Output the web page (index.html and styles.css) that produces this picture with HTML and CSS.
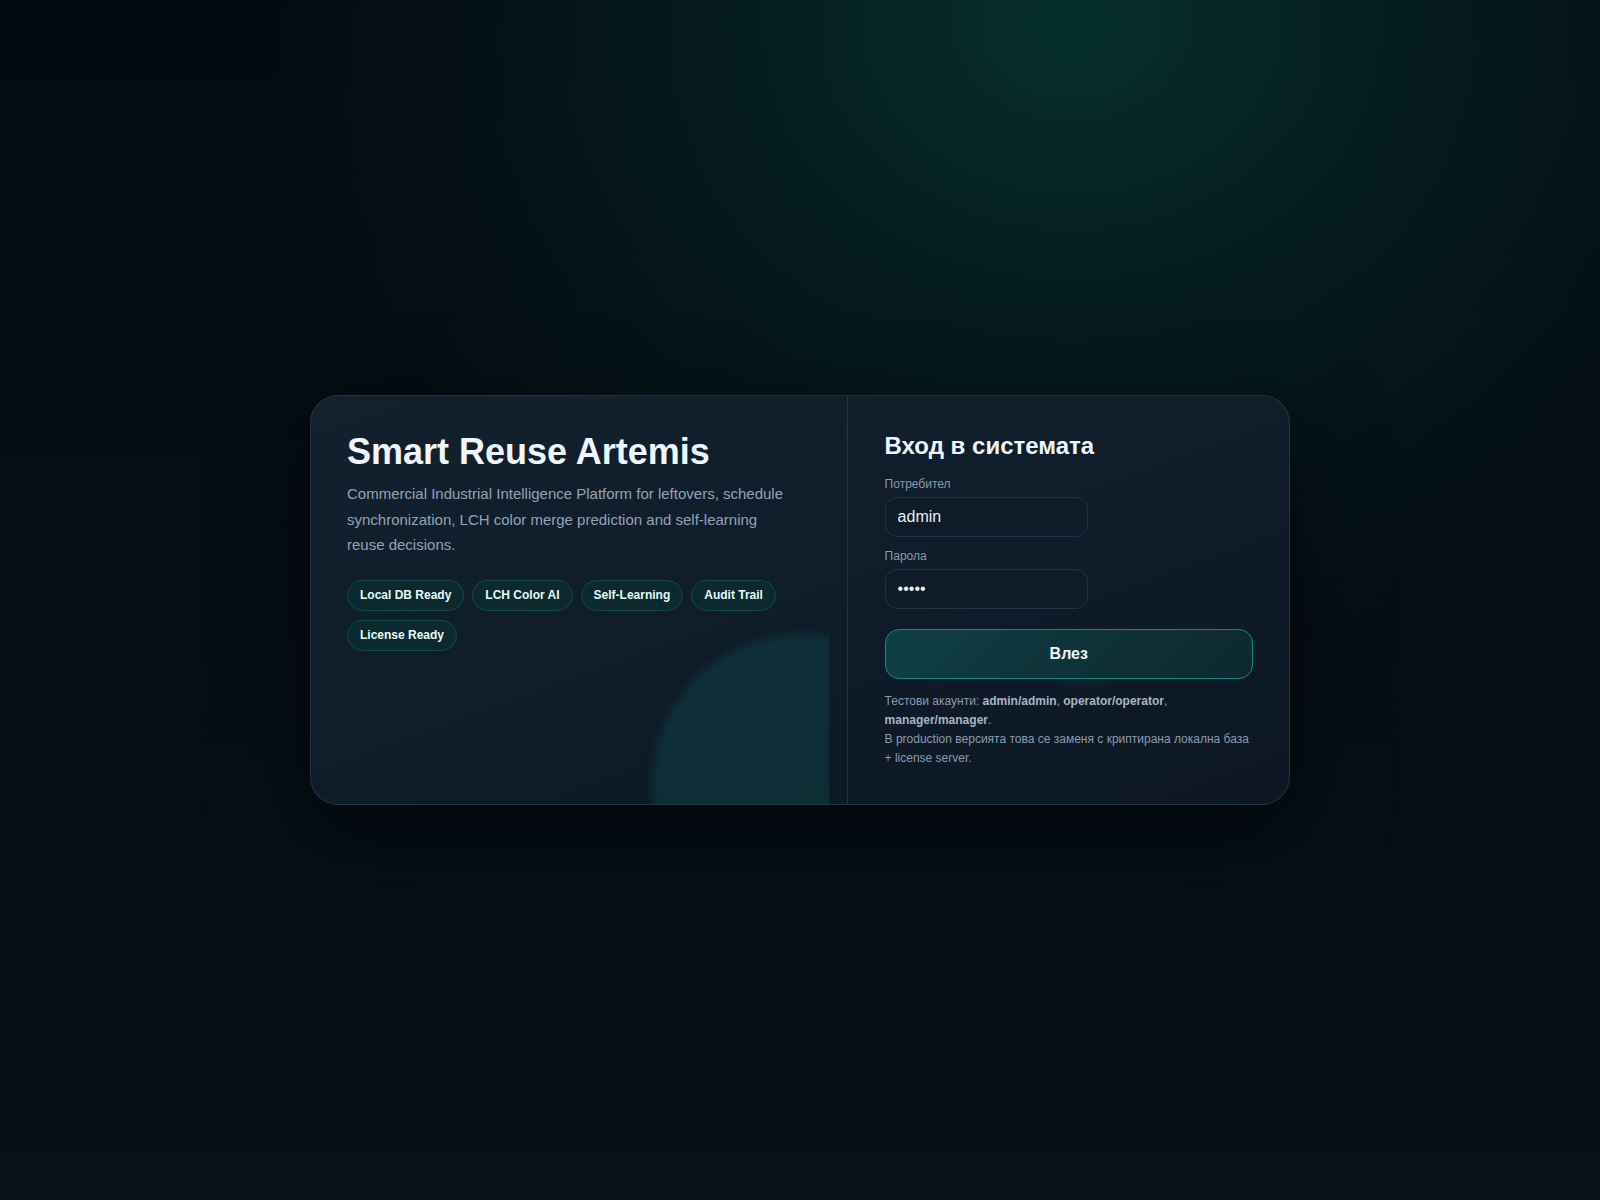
FILE: index.html
```html
<!DOCTYPE html>
<html lang="bg">
	<head>
		<meta charset="UTF-8" />
		<meta name="viewport" content="width=device-width, initial-scale=1.0" />
		<title>Smart Reuse Artemis - Вход</title>

		<link rel="stylesheet" href="styles.css">
	</head>
	<body>
		<div class="login-card">
			<div class="hero">
				<h1 class="hero-title">Smart Reuse Artemis</h1>
				<p class="hero-text">
					Commercial Industrial Intelligence Platform for leftovers, schedule
					synchronization, LCH color merge prediction and self-learning
					reuse decisions.
				</p>
				<div class="chips">
					<span class="chip">Local DB Ready</span>
					<span class="chip">LCH Color AI</span>
					<span class="chip">Self-Learning</span>
					<span class="chip">Audit Trail</span>
					<span class="chip">License Ready</span>
				</div>
			</div>

			<form class="login-form" onsubmit="return false;">
				<h2 class="form-title">Вход в системата</h2>

				<div class="field">
					<label for="username">Потребител</label>
					<input type="text" id="username" name="username" value="admin" />
				</div>

				<div class="field">
					<label for="password">Парола</label>
					<input type="password" id="password" name="password" value="admin" />
				</div>

				<button class="btn-login" type="submit">Влез</button>

				<p class="note">
					Тестови акаунти: <b>admin/admin</b>, <b>operator/operator</b>,
					<b>manager/manager</b>.<br />
					В production версията това се заменя с криптирана локална база
					+ license server.
				</p>
			</form>
		</div>
	</body>
</html>
```

FILE: styles.css
```css
* {
	box-sizing: border-box;
}

html,
body {
	height: 100%;
}

body {
	margin: 0;
	display: flex;
	align-items: center;
	justify-content: center;
	font-family: "Liberation Sans", Arial, sans-serif;
	color: #e2e8f0;
	background:
		radial-gradient(ellipse 800px 640px at 67% 2%, #06302c 0%, rgba(5, 40, 40, 0.6) 40%, rgba(5, 20, 26, 0) 100%),
		linear-gradient(180deg, #040a11 0%, #050e16 60%, #06111a 100%);
}

.login-card {
	width: 980px;
	display: grid;
	grid-template-columns: 1.17fr 1fr;
	column-gap: 18px;
	border: 1px solid rgba(148, 163, 184, 0.17);
	border-radius: 28px;
	background: linear-gradient(160deg, #13212f 0%, #0f1c29 50%, #0c1723 100%);
	box-shadow: 0 30px 90px rgba(0, 0, 0, 0.55);
	overflow: hidden;
}

/* left side */

.hero {
	position: relative;
	overflow: hidden;
	padding: 36px;
}

.hero::after {
	content: "";
	position: absolute;
	width: 300px;
	height: 300px;
	right: -123px;
	bottom: -130px;
	border-radius: 50%;
	background: rgba(16, 120, 115, 0.22);
	filter: blur(4px);
}

.hero-title {
	margin: 0 0 10px;
	font-size: 36px;
	line-height: 1.1;
	font-weight: bold;
	color: #eef5fc;
}

.hero-text {
	margin: 0;
	font-size: 15px;
	line-height: 1.7;
	color: #94a3b8;
}

.chips {
	display: flex;
	flex-wrap: wrap;
	gap: 9px 8px;
	margin-top: 22px;
}

.chip {
	padding: 7px 12px;
	font-size: 12px;
	line-height: 15px;
	font-weight: bold;
	color: #e6faf5;
	background: #0b292e;
	border: 1px solid #124a46;
	border-radius: 999px;
}

/* right side */

.login-form {
	padding: 36px 36px 36px 37px;
	border-left: 1px solid rgba(148, 163, 184, 0.18);
}

.form-title {
	margin: 0 0 17px;
	font-size: 24px;
	font-weight: bold;
	color: #eef5fc;
}

.field {
	margin-bottom: 12px;
}

.field label {
	display: block;
	margin-bottom: 6px;
	font-size: 12px;
	line-height: 14px;
	color: #8c9bb0;
}

.field input {
	width: 203px;
	height: 40px;
	padding: 0 12px;
	font-family: inherit;
	font-size: 16px;
	color: #e9eff6;
	background: #0f1b28;
	border: 1px solid #243243;
	border-radius: 12px;
	outline: none;
}

.btn-login {
	display: block;
	width: 100%;
	height: 50px;
	margin-top: 20px;
	font-family: inherit;
	font-size: 16px;
	font-weight: bold;
	color: #f1f5f9;
	background: linear-gradient(135deg, #0f4046 0%, #0e3338 50%, #0d2830 100%);
	border: 1px solid #178a80;
	border-radius: 14px;
	cursor: pointer;
}

.note {
	margin: 13px 0 0;
	font-size: 12px;
	line-height: 1.6;
	color: #8c9bb0;
}

.note b {
	color: #a7b4c6;
}
```
